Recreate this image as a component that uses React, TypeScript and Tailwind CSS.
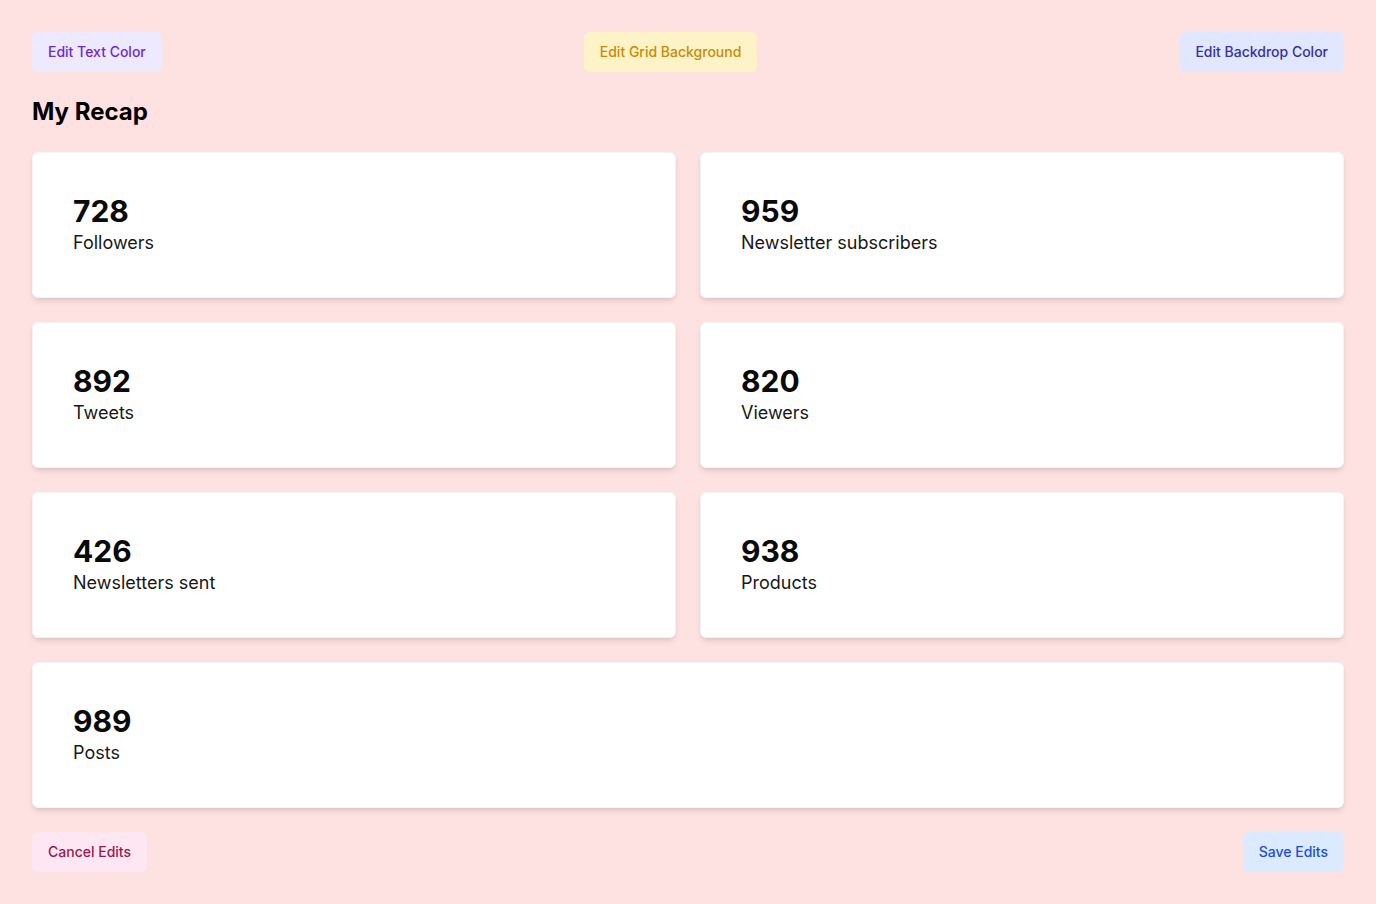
import React from 'react';

type Stat = { value: number; label: string };

const stats: Stat[] = [
    { value: 728, label: 'Followers' },
    { value: 959, label: 'Newsletter subscribers' },
    { value: 892, label: 'Tweets' },
    { value: 820, label: 'Viewers' },
    { value: 426, label: 'Newsletters sent' },
    { value: 938, label: 'Products' },
    { value: 989, label: 'Posts' },
];

const StatCard: React.FC<{ stat: Stat; wide?: boolean }> = ({ stat, wide }) => (
    <div className={`bg-white border border-gray-100 rounded-md shadow-md p-10 ${wide ? 'col-span-2' : ''}`}>
        <p className="text-3xl font-bold text-[#0a0a0a]">{stat.value}</p>
        <p className="text-lg text-[#171717]">{stat.label}</p>
    </div>
);

const App: React.FC = () => {
    return (
        <div className="min-h-screen bg-[#fee2e2] p-8" style={{ fontFamily: 'Inter, "Noto Sans", sans-serif' }}>
            <div className="flex items-center justify-between">
                <button className="bg-[#ede9fe] text-[#6d28d9] text-sm font-medium px-4 py-2.5 rounded-md">Edit Text Color</button>
                <button className="bg-[#fef3c7] text-[#ca8a04] text-sm font-medium px-4 py-2.5 rounded-md">Edit Grid Background</button>
                <button className="bg-[#e0e7ff] text-[#3730a3] text-sm font-medium px-4 py-2.5 rounded-md">Edit Backdrop Color</button>
            </div>

            <h1 className="mt-6 mb-6 text-2xl font-bold text-black">My Recap</h1>

            <div className="grid grid-cols-2 gap-6">
                {stats.map((s, i) => (
                    <StatCard key={s.label} stat={s} wide={i === stats.length - 1} />
                ))}
            </div>

            <div className="mt-6 flex items-center justify-between">
                <button className="bg-[#fce7f3] text-[#9d174d] text-sm font-medium px-4 py-2.5 rounded-md">Cancel Edits</button>
                <button className="bg-[#dbeafe] text-[#1d4ed8] text-sm font-medium px-4 py-2.5 rounded-md">Save Edits</button>
            </div>
        </div>
    );
};

export default App;
